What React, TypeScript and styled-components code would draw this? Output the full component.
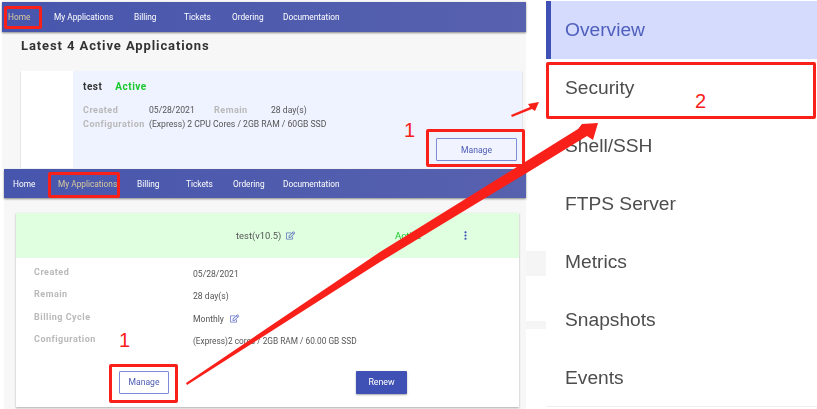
import React from "react"
import styled, { createGlobalStyle } from "styled-components"
import { FaRegEdit } from "react-icons/fa"
import { MdMoreVert } from "react-icons/md"

const GlobalStyle = createGlobalStyle`
    html, body { margin: 0; padding: 0; background: #ffffff; }
    body { font-family: Roboto, "Liberation Sans", sans-serif; }
`

const Stage = styled.div`
    position: relative;
    width: 817px;
    height: 409px;
    overflow: hidden;
    display: grid;
    grid-template-columns: 526px 20px 271px;
`

const LeftColumn = styled.div`
    display: flex;
    flex-direction: column;
    filter: blur(0.35px);
`

const Shot = styled.section<{ $left: number; $height: number }>`
    margin-left: ${({ $left }) => $left}px;
    height: ${({ $height }) => $height}px;
    background: #f7f7f7;
    display: flex;
    flex-direction: column;
`

const NavBar = styled.nav<{ $columns: string; $left: number; $height: number; $top: number }>`
    flex: none;
    margin-top: ${({ $top }) => $top}px;
    height: ${({ $height }) => $height}px;
    padding-left: ${({ $left }) => $left}px;
    display: grid;
    grid-template-columns: ${({ $columns }) => $columns};
    align-items: center;
    background: linear-gradient(90deg, #4756ad, #5761ae);
    box-shadow: 0 1px 2px rgba(0, 0, 0, 0.45);
`

const NavLink = styled.span<{ $active?: boolean }>`
    font-size: 8.3px;
    font-weight: 400;
    white-space: nowrap;
    color: ${({ $active }) => ($active ? "#d9c99a" : "#ffffff")};
`

const Heading = styled.h2`
    margin: 6px 0 0 19px;
    font-size: 13px;
    line-height: 15px;
    font-weight: 700;
    letter-spacing: 0.9px;
    color: #333333;
`

const SummaryCard = styled.article`
    margin: 18px 4px 0 19px;
    height: 97px;
    display: flex;
    background: #eff2ff;
    box-shadow: 0 1px 1px rgba(0, 0, 0, 0.4);
`

const Thumb = styled.div`
    width: 52px;
    background: #ffffff;
`

const SummaryBody = styled.div`
    flex: 1;
    padding: 10px 5px 7px 10px;
    display: flex;
    flex-direction: column;
`

const TitleRow = styled.div`
    display: flex;
    gap: 13px;
    font-size: 10px;
    line-height: 12px;
    font-weight: 700;
    letter-spacing: 0.5px;
    margin-bottom: 10px;
`

const TestName = styled.span`
    color: #333333;
`

const StatusText = styled.span`
    color: #17c92a;
`

const SummaryGrid = styled.div`
    display: grid;
    grid-template-columns: 66px 65px 57px auto;
    grid-auto-rows: 14px;
    align-items: center;
`

const Label = styled.span`
    font-size: 9px;
    font-weight: 700;
    letter-spacing: 0.5px;
    white-space: nowrap;
    color: #b9b9b9;
`

const Value = styled.span<{ $wide?: boolean; $tight?: boolean }>`
    font-size: ${({ $tight }) => ($tight ? "8.3px" : "8.6px")};
    white-space: nowrap;
    color: #555555;
    ${({ $wide }) => ($wide ? "grid-column: 2 / 5;" : "")}
`

const OutlineButton = styled.button<{ $width: number }>`
    width: ${({ $width }) => $width}px;
    height: 23px;
    padding: 0;
    background: #ffffff;
    border: 1px solid #7e8bd6;
    border-radius: 1px;
    font-family: inherit;
    font-size: 8.6px;
    color: #4c5bb5;
`

const SummaryAction = styled(OutlineButton)`
    margin-top: auto;
    align-self: flex-end;
    background: #f1f3ff;
`

const AppCard = styled.article`
    margin: 15px 0 0 12px;
    width: 503px;
    height: 194px;
    background: #ffffff;
    box-shadow: 0 1px 2px rgba(0, 0, 0, 0.3);
`

const AppHeader = styled.header`
    height: 45px;
    display: grid;
    grid-template-columns: 220px 159px 64px auto;
    align-items: center;
    background: #e0ffe0;
`

const AppTitle = styled.span`
    grid-column: 1;
    padding-left: 220px;
    display: flex;
    align-items: center;
    gap: 5px;
    font-size: 9.4px;
    white-space: nowrap;
    color: #555555;

    svg {
        flex: none;
    }
`

const HeaderSpacer = styled.span``

const HeaderStatus = styled.span`
    font-size: 9.6px;
    color: #17c92a;
`

const MenuDots = styled.span`
    display: flex;
    color: #3f51b5;
`

const AppDetails = styled.div`
    padding: 3px 0 0 18px;
    display: grid;
    grid-template-columns: 159px auto;
    grid-auto-rows: 22.4px;
    align-items: start;
`

const DetailLabel = styled(Label)`
    line-height: 22px;
`

const DetailValue = styled(Value)`
    line-height: 22px;
    padding-top: 2px;
    display: flex;
    align-items: center;
    gap: 6px;
`

const EditIcon = styled(FaRegEdit)`
    color: #3f51b5;
    opacity: 0.8;
`

const AppActions = styled.div`
    margin-top: 20px;
    padding-left: 103px;
    display: flex;
    gap: 187px;
`

const ManageButton = styled(OutlineButton)``

const RenewButton = styled.button`
    width: 51px;
    height: 23px;
    padding: 0;
    border: none;
    border-radius: 1px;
    background: #3f51b5;
    box-shadow: 0 1px 2px rgba(0, 0, 0, 0.35);
    font-family: inherit;
    font-size: 8.8px;
    color: #ffffff;
`

const Gutter = styled.div`
    display: flex;
    flex-direction: column;
    padding-top: 251px;
    gap: 45px;
`

const GutterBand = styled.div<{ $height: number }>`
    height: ${({ $height }) => $height}px;
    background: #f5f5f5;
`

const Sidebar = styled.aside`
    padding-top: 1px;
    height: 405px;
    border-bottom: 1px solid #eeeeee;
    filter: blur(0.2px);
`

const SideItem = styled.div<{ $active?: boolean }>`
    box-sizing: border-box;
    height: 58px;
    display: flex;
    align-items: center;
    padding-left: ${({ $active }) => ($active ? "14px" : "19px")};
    border-left: ${({ $active }) => ($active ? "5px solid #3f51b5" : "none")};
    background: ${({ $active }) => ($active ? "#d4dbfd" : "transparent")};
    font-family: "Liberation Sans", Arial, sans-serif;
    font-size: 19.2px;
    color: ${({ $active }) => ($active ? "#4f5fbd" : "#4d4d4d")};
`

const RedBox = styled.div<{ $x: number; $y: number; $w: number; $h: number }>`
    position: absolute;
    box-sizing: border-box;
    left: ${({ $x }) => $x}px;
    top: ${({ $y }) => $y}px;
    width: ${({ $w }) => $w}px;
    height: ${({ $h }) => $h}px;
    border: 3px solid #f9201a;
    border-radius: 2px;
`

const Marker = styled.span<{ $x: number; $y: number }>`
    position: absolute;
    left: ${({ $x }) => $x}px;
    top: ${({ $y }) => $y}px;
    font-family: "Liberation Sans", Arial, sans-serif;
    font-size: 20px;
    line-height: 20px;
    color: #f9201a;
`

const ArrowLayer = styled.svg`
    position: absolute;
    left: 0;
    top: 0;
`

const topNav = ["Home", "My Applications", "Billing", "Tickets", "Ordering", "Documentation"]
const sideItems = ["Overview", "Security", "Shell/SSH", "FTPS Server", "Metrics", "Snapshots", "Events"]
const details = [
    { label: "Created", value: "05/28/2021" },
    { label: "Remain", value: "28 day(s)" },
    { label: "Billing Cycle", value: "Monthly", editable: true },
    { label: "Configuration", value: "(Express)2 cores / 2GB RAM / 60.00 GB SSD", tight: true },
]

const App: React.FC = () => {
    return (
        <Stage>
            <GlobalStyle />
            <LeftColumn>
                <Shot $left={2} $height={168}>
                    <NavBar $top={2} $left={6} $height={30} $columns="46px 80px 50px 48px 51px auto">
                        {topNav.map((item, index) => (
                            <NavLink key={item} $active={index === 0}>{item}</NavLink>
                        ))}
                    </NavBar>
                    <Heading>Latest 4 Active Applications</Heading>
                    <SummaryCard>
                        <Thumb />
                        <SummaryBody>
                            <TitleRow>
                                <TestName>test</TestName>
                                <StatusText>Active</StatusText>
                            </TitleRow>
                            <SummaryGrid>
                                <Label>Created</Label>
                                <Value>05/28/2021</Value>
                                <Label>Remain</Label>
                                <Value>28 day(s)</Value>
                                <Label>Configuration</Label>
                                <Value $wide>(Express) 2 CPU Cores / 2GB RAM / 60GB SSD</Value>
                            </SummaryGrid>
                            <SummaryAction $width={81}>Manage</SummaryAction>
                        </SummaryBody>
                    </SummaryCard>
                </Shot>
                <Shot $left={4} $height={241}>
                    <NavBar $top={1} $left={9} $height={29} $columns="45px 79px 49px 47px 50px auto">
                        {topNav.map((item, index) => (
                            <NavLink key={item} $active={index === 1}>{item}</NavLink>
                        ))}
                    </NavBar>
                    <AppCard>
                        <AppHeader>
                            <AppTitle>
                                test(v10.5)
                                <EditIcon size={9} />
                            </AppTitle>
                            <HeaderSpacer />
                            <HeaderStatus>Active</HeaderStatus>
                            <MenuDots><MdMoreVert size={13} /></MenuDots>
                        </AppHeader>
                        <AppDetails>
                            {details.map((row) => (
                                <React.Fragment key={row.label}>
                                    <DetailLabel>{row.label}</DetailLabel>
                                    <DetailValue $tight={row.tight}>
                                        {row.value}
                                        {row.editable && <EditIcon size={9} />}
                                    </DetailValue>
                                </React.Fragment>
                            ))}
                        </AppDetails>
                        <AppActions>
                            <ManageButton $width={50}>Manage</ManageButton>
                            <RenewButton>Renew</RenewButton>
                        </AppActions>
                    </AppCard>
                </Shot>
            </LeftColumn>
            <Gutter>
                <GutterBand $height={25} />
                <GutterBand $height={8} />
            </Gutter>
            <Sidebar>
                {sideItems.map((item, index) => (
                    <SideItem key={item} $active={index === 0}>{item}</SideItem>
                ))}
            </Sidebar>

            <RedBox $x={4} $y={6} $w={38} $h={23} />
            <RedBox $x={48} $y={172} $w={72} $h={26} />
            <RedBox $x={426} $y={129} $w={99} $h={38} />
            <RedBox $x={109} $y={364} $w={69} $h={39} />
            <RedBox $x={546} $y={62} $w={270} $h={57} />
            <Marker $x={404} $y={120}>1</Marker>
            <Marker $x={119} $y={330}>1</Marker>
            <Marker $x={695} $y={91}>2</Marker>
            <ArrowLayer width="817" height="409" viewBox="0 0 817 409">
                <polygon fill="#f9201a" points="186,383 380,252 525,162 578,129 582,124 598,123 593,140 587,136 525,174 380,262 187,385" />
                <polygon fill="#f9201a" points="511,115 530,107 528,104 539,102 535,111 532,109 512,117" />
            </ArrowLayer>
        </Stage>
    )
}

export default App
